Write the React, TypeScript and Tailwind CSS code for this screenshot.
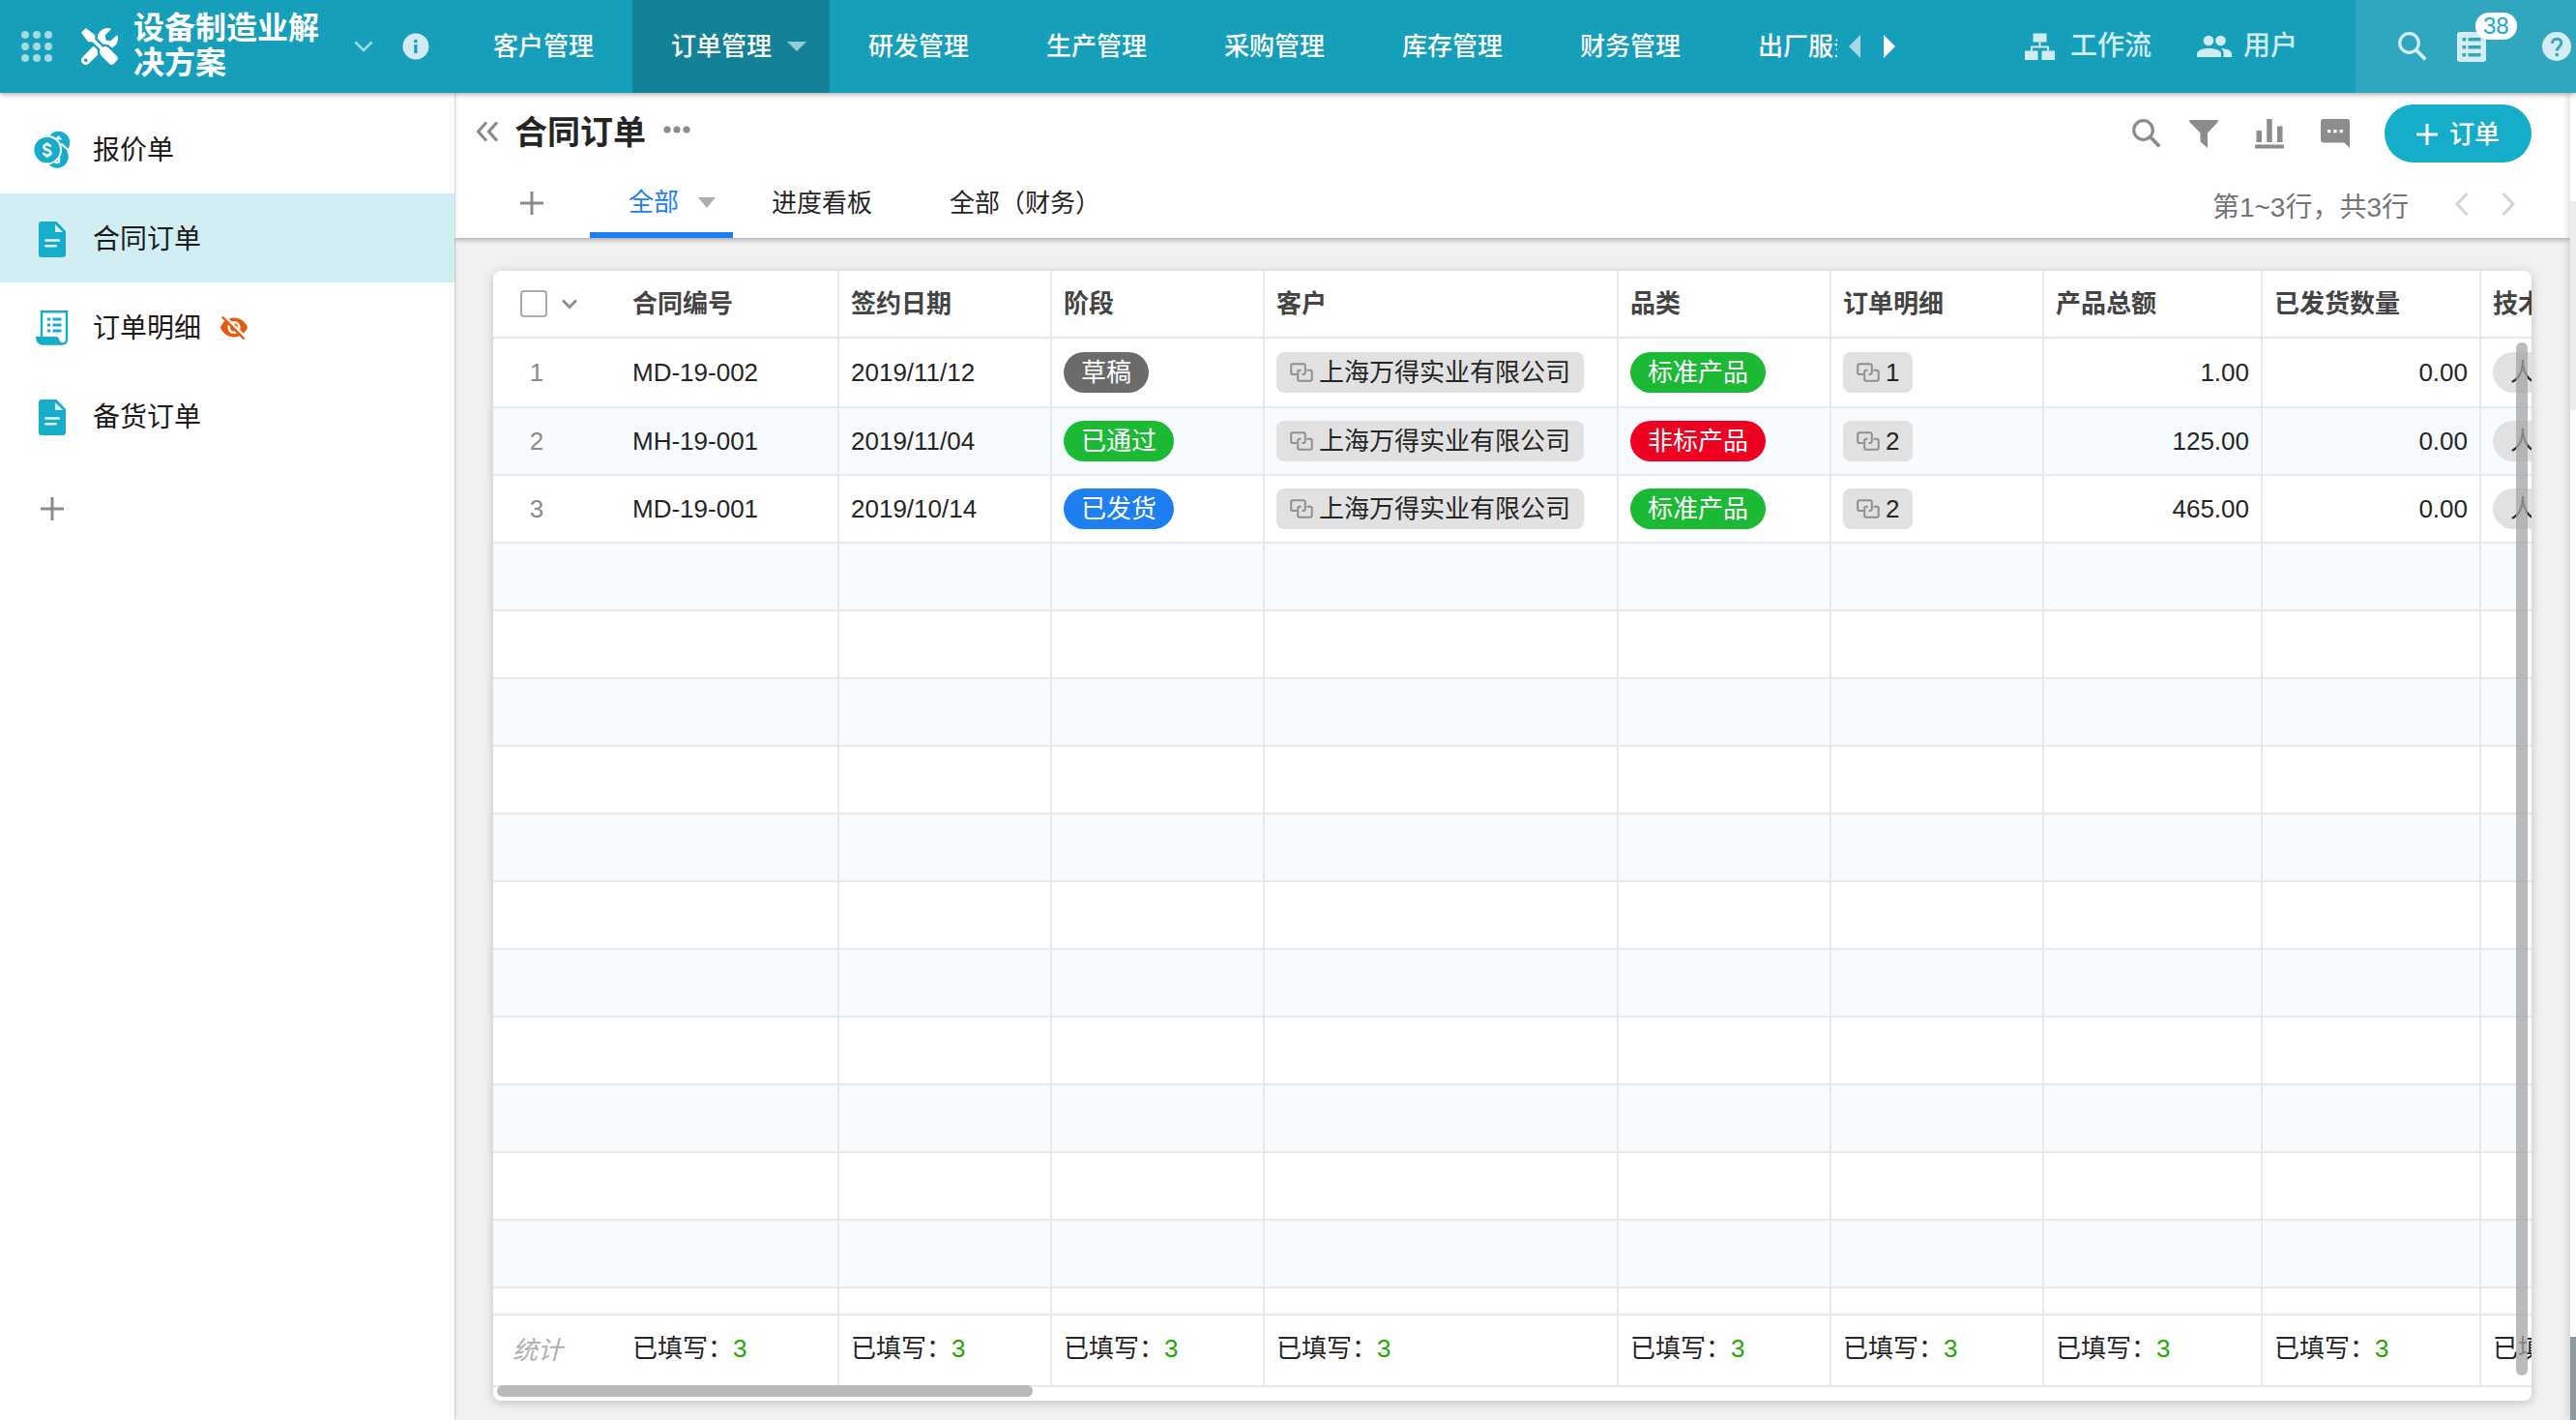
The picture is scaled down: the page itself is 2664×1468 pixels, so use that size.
import type { ReactNode } from 'react';
import clsx from 'clsx';
import { FaTools } from 'react-icons/fa';

const NAV_ITEMS = ['客户管理', '订单管理', '研发管理', '生产管理', '采购管理', '库存管理', '财务管理', '出厂服务'];

const COLUMNS = ['签约日期', '阶段', '客户', '品类', '订单明细', '产品总额', '已发货数量', '技术员'];

const ORDERS = [
  {
    code: 'MD-19-002',
    date: '2019/11/12',
    stage: '草稿',
    stageColor: 'bg-[#6b6b6b]',
    customer: '上海万得实业有限公司',
    category: '标准产品',
    categoryColor: 'bg-[#1bb934]',
    details: 1,
    total: '1.00',
    shipped: '0.00',
  },
  {
    code: 'MH-19-001',
    date: '2019/11/04',
    stage: '已通过',
    stageColor: 'bg-[#1bb934]',
    customer: '上海万得实业有限公司',
    category: '非标产品',
    categoryColor: 'bg-[#f00020]',
    details: 2,
    total: '125.00',
    shipped: '0.00',
  },
  {
    code: 'MD-19-001',
    date: '2019/10/14',
    stage: '已发货',
    stageColor: 'bg-[#1e80f0]',
    customer: '上海万得实业有限公司',
    category: '标准产品',
    categoryColor: 'bg-[#1bb934]',
    details: 2,
    total: '465.00',
    shipped: '0.00',
  },
];

// Blank rows that fill the grid below the data
const BLANK_ROWS = Array.from({ length: 11 }, (_, i) => i);

/* ---------- icons ---------- */

function GridIcon() {
  return (
    <svg width="32" height="32" viewBox="0 0 32 32" fill="currentColor">
      {[4, 16, 28].map((y) => [4, 16, 28].map((x) => <circle key={`${x}-${y}`} cx={x} cy={y} r="4" />))}
    </svg>
  );
}

function InfoIcon() {
  return (
    <svg width="28" height="28" viewBox="0 0 28 28">
      <circle cx="14" cy="14" r="13.5" fill="#d0ecf2" />
      <rect x="12.3" y="7" width="3.2" height="3.2" fill="#169fba" />
      <rect x="12.3" y="12" width="3.2" height="9" fill="#169fba" />
    </svg>
  );
}

function SearchIcon() {
  return (
    <svg width="30" height="30" viewBox="0 0 30 30" fill="none" stroke="currentColor">
      <circle cx="11.5" cy="11.5" r="9.8" strokeWidth="3.2" />
      <path d="M18.5 18.5L28.3 28.3" strokeWidth="3.8" />
    </svg>
  );
}

function WorkflowIcon() {
  return (
    <svg width="31" height="28" viewBox="0 0 31 28" fill="currentColor">
      <rect x="8.5" y="0.5" width="14" height="9" />
      <rect x="0" y="18.5" width="13.5" height="9.5" />
      <rect x="17.5" y="18.5" width="13.5" height="9.5" />
      <path d="M14.5 9.5h2v4h8.5v5h-2v-3H8v3H6v-5h8.5z" />
    </svg>
  );
}

function UsersIcon() {
  return (
    <svg width="36" height="24" viewBox="0 0 36 24" fill="currentColor">
      <circle cx="12" cy="6" r="5.3" />
      <circle cx="24.5" cy="6" r="5.3" />
      <path d="M0 23v-3.5C0 16 6 14 12.5 14S25 16 25 19.5V23z" />
      <path d="M27.5 23v-4c0-2-1-3.7-3-4.9 6 .2 11.500 2.1 11.500 5.4V23z" />
    </svg>
  );
}

function ListIcon() {
  return (
    <svg width="30" height="31" viewBox="0 0 30 31">
      <rect width="30" height="31" rx="3" fill="#d4edf2" />
      <g fill="#30a7bf">
        {[6, 14, 22].map((y) => (
          <g key={y}>
            <rect x="5.5" y={y} width="3.5" height="3.5" />
            <rect x="11.5" y={y} width="13" height="3.5" />
          </g>
        ))}
      </g>
    </svg>
  );
}

function HelpIcon() {
  return (
    <svg width="30" height="30" viewBox="0 0 30 30">
      <circle cx="15" cy="15" r="15" fill="#d4edf2" />
      <path
        d="M10.5 12c0-3 2-4.800 4.700-4.800s4.600 1.800 4.600 4.300c0 3.600-4.600 4-4.600 8"
        fill="none"
        stroke="#30a7bf"
        strokeWidth="3"
      />
      <rect x="13.6" y="22" width="3.2" height="3.2" fill="#30a7bf" />
    </svg>
  );
}

function CoinsIcon() {
  return (
    <svg width="38" height="40" viewBox="0 0 38 40">
      <circle cx="24" cy="27" r="11.7" fill="#16adca" />
      <path d="M22 33.5l4-1v-5" stroke="#fff" strokeWidth="2.2" fill="none" />
      <circle cx="25.5" cy="12.5" r="11.7" fill="#16adca" />
      <path d="M25.5 5.500v2.800M22.500 8.500h6M28 13.500l10 8.500" stroke="#fff" strokeWidth="2.2" fill="none" />
      <circle cx="13.7" cy="20" r="15.3" fill="#fff" />
      <circle cx="13.7" cy="20" r="13.3" fill="#16adca" />
      <path
        d="M17.200 16.800c-.3-1.600-1.600-2.300-3.500-2.300-2 0-3.300 1-3.300 2.500 0 3.800 7 2 7 5.900 0 1.700-1.500 2.700-3.600 2.700s-3.500-.9-3.800-2.700M13.800 12.500v2.500M13.800 25v2.800"
        fill="none"
        stroke="#fff"
        strokeWidth="2.6"
      />
    </svg>
  );
}

function DocIcon() {
  return (
    <svg width="28" height="37" viewBox="0 0 28 37">
      <path d="M3 0h15.500L28 10v24a3 3 0 0 1-3 3H3a3 3 0 0 1-3-3V3a3 3 0 0 1 3-3z" fill="#16adca" />
      <path d="M17 3v8h8.200z" fill="#d9f1f5" />
      <path d="M7.300 19.500h13.500M7.300 25.300h10.500" stroke="#e3f5f8" strokeWidth="2.6" strokeLinecap="round" />
    </svg>
  );
}

function ReceiptIcon() {
  return (
    <svg width="34" height="36" viewBox="0 0 34 36">
      <path
        d="M6 27V1.200h26V30c0 2.800-1.800 4.500-4.500 4.500S23 32.500 22.500 28"
        fill="none"
        stroke="#16adca"
        strokeWidth="2.4"
      />
      <path d="M0 27h22c.4 4 2.200 7 5.500 8.700H7c-4.500 0-7-3.500-7-8.700z" fill="#16adca" />
      <g fill="#16adca">
        {[7.5, 13.5, 19.5].map((y) => (
          <g key={y}>
            <rect x="12" y={y} width="3" height="3" />
            <rect x="17.5" y={y} width="9" height="3" />
          </g>
        ))}
      </g>
    </svg>
  );
}

function HiddenIcon() {
  return (
    <svg width="28" height="26" viewBox="0 0 28 26">
      <path d="M0 12.500C2.500 6 8 2.500 14 2.500S25.500 6 28 12.500C25.500 19 20 22.500 14 22.500S2.500 19 0 12.500z" fill="#e9590c" />
      <circle cx="14" cy="12.5" r="5.3" fill="none" stroke="#fff" strokeWidth="2.6" />
      <path d="M4 .5L26.500 23" stroke="#fff" strokeWidth="2.4" />
      <path d="M1.800 1.500L24.500 24.500" stroke="#e9590c" strokeWidth="2.4" />
    </svg>
  );
}

function PlusIcon() {
  return (
    <svg width="24" height="24" viewBox="0 0 24 24" stroke="currentColor" strokeWidth="3">
      <path d="M12 0v24M0 12h24" />
    </svg>
  );
}

function FilterIcon() {
  return (
    <svg width="30" height="29" viewBox="0 0 30 29" fill="currentColor">
      <path d="M1.500 0h27c1.300 0 1.900 1.200 1 2.300L19 13.500V29l-7.500-6.500v-9L.5 2.300C-.4 1.200.2 0 1.500 0z" />
    </svg>
  );
}

function ChartIcon() {
  return (
    <svg width="30" height="31" viewBox="0 0 30 31" fill="currentColor">
      <rect x="1.5" y="12" width="5.5" height="12" />
      <rect x="12.2" y="0" width="5.5" height="24" />
      <rect x="23" y="7.5" width="5.5" height="16.5" />
      <rect x="0" y="26.5" width="30" height="4" />
    </svg>
  );
}

function CommentIcon() {
  return (
    <svg width="30" height="30" viewBox="0 0 30 30" fill="currentColor">
      <path d="M3 0h24a3 3 0 0 1 3 3v27l-5.500-5.500H3a3 3 0 0 1-3-3V3a3 3 0 0 1 3-3z" />
      <path d="M7 11h3.300v3.300H7zM13.300 11h3.300v3.300h-3.300zM19.600 11h3.300v3.300h-3.300z" fill="#fff" />
    </svg>
  );
}

function RelationIcon() {
  return (
    <svg width="24" height="20" viewBox="0 0 24 20" fill="none" stroke="#8f8f8f" strokeWidth="2">
      <path d="M7 12H3a1.800 1.800 0 0 1-1.800-1.800V3A1.800 1.800 0 0 1 3 1.200h11A1.800 1.800 0 0 1 15.800 3v7.200A1.800 1.800 0 0 1 14 12h-1.500" />
      <path d="M17.500 7.800h3.400a1.800 1.800 0 0 1 1.800 1.800V17a1.800 1.800 0 0 1-1.800 1.800H10A1.800 1.800 0 0 1 8.200 17V9.600A1.800 1.800 0 0 1 10 7.800h1.500" />
    </svg>
  );
}

/* ---------- header ---------- */

function TopBar() {
  return (
    <header className="relative z-20 flex h-24 items-center bg-[#169fba] text-white shadow-[0_1px_6px_rgba(0,0,0,0.4)]">
      <div className="flex w-[470px] shrink-0 items-center pl-[22px]">
        <button aria-label="应用" className="text-[#a2d9e3]">
          <GridIcon />
        </button>
        <FaTools className="ml-[30px] size-[38px]" />
        <h1 className="ml-4 w-[200px] pb-0.5 text-[32px] leading-9 font-bold">设备制造业解决方案</h1>
        <button aria-label="展开" className="ml-7 text-[#a2d9e3]">
          <svg width="20" height="12" viewBox="0 0 20 12" fill="none" stroke="currentColor" strokeWidth="2.5">
            <path d="M1.500 1.500L10 10l8.500-8.500" />
          </svg>
        </button>
        <button aria-label="信息" className="ml-[30px]">
          <InfoIcon />
        </button>
      </div>

      <nav className="flex h-full min-w-0 flex-1 overflow-hidden text-[26px] font-medium whitespace-nowrap">
        {NAV_ITEMS.map((item) => {
          const active = item === '订单管理';
          return (
            <a
              key={item}
              href="#"
              className={clsx('flex h-full shrink-0 items-center gap-4 pl-10', active ? 'bg-[#148296] pr-6' : 'pr-10')}
            >
              {item}
              {active && (
                <svg width="20" height="10" viewBox="0 0 20 10" fill="#99cbd5">
                  <path d="M0 0h20L10 10z" />
                </svg>
              )}
            </a>
          );
        })}
      </nav>

      <div className="flex shrink-0 items-center gap-6 pl-3">
        <button aria-label="向左" className="text-[#a2d9e3]">
          <svg width="12" height="24" viewBox="0 0 12 24" fill="currentColor">
            <path d="M12 0v24L0 12z" />
          </svg>
        </button>
        <button aria-label="向右">
          <svg width="12" height="24" viewBox="0 0 12 24" fill="currentColor">
            <path d="M0 0v24l12-12z" />
          </svg>
        </button>
      </div>

      <div className="flex shrink-0 items-center pr-[60px] pl-[134px] text-[28px] font-medium text-[#d0ecf2]">
        <a href="#" className="flex items-center gap-4">
          <WorkflowIcon />
          工作流
        </a>
        <a href="#" className="ml-[47px] flex items-center gap-3">
          <UsersIcon />
          用户
        </a>
      </div>

      <div className="flex h-full shrink-0 items-center bg-[#30a7bf] pr-[5px] pl-11 text-[#d4edf2]">
        <button aria-label="搜索">
          <SearchIcon />
        </button>
        <button aria-label="待办" className="relative ml-[31px]">
          <ListIcon />
          <span className="absolute -top-5 left-[19px] rounded-full bg-white px-2 text-[24px] leading-7 text-[#16adca]">
            38
          </span>
        </button>
        <button aria-label="帮助" className="ml-[58px]">
          <HelpIcon />
        </button>
      </div>
    </header>
  );
}

/* ---------- sidebar ---------- */

function SidebarItem({ icon, label, active, hidden }: { icon: ReactNode; label: string; active?: boolean; hidden?: boolean }) {
  return (
    <a href="#" className={clsx('flex h-[92px] items-center pt-0.5 pl-[35px]', active && 'bg-[#d0eef3]')}>
      <span className="flex w-[38px] justify-center">{icon}</span>
      <span className="ml-[23px] pt-0.5 text-[28px]">{label}</span>
      {hidden && (
        <span className="ml-5">
          <HiddenIcon />
        </span>
      )}
    </a>
  );
}

function Sidebar() {
  return (
    <aside className="relative z-10 w-[470px] shrink-0 bg-white pt-3 text-[#1a1a1a] shadow-[0_0_3px_rgba(0,0,0,0.35)]">
      <SidebarItem icon={<CoinsIcon />} label="报价单" />
      <SidebarItem icon={<DocIcon />} label="合同订单" active />
      <SidebarItem icon={<ReceiptIcon />} label="订单明细" hidden />
      <SidebarItem icon={<DocIcon />} label="备货订单" />
      <button aria-label="添加" className="mt-[38px] ml-[42px] block text-[#8c8c8c]">
        <PlusIcon />
      </button>
    </aside>
  );
}

/* ---------- worksheet ---------- */

function SheetHeader() {
  return (
    <div className="relative bg-white pt-3 shadow-[0_1px_6px_rgba(0,0,0,0.4)]">
      <div className="flex h-[60px] items-center pr-10 pl-[22px] text-[#8c8c8c]">
        <button aria-label="收起">
          <svg width="24" height="22" viewBox="0 0 24 22" fill="none" stroke="currentColor" strokeWidth="3.2" className="mb-1">
            <path d="M11 1.500L2.500 11l8.500 9.500M22 1.500L13.500 11l8.500 9.500" />
          </svg>
        </button>
        <h2 className="ml-4 pb-0.5 text-[34px] leading-10 font-bold text-[#252525]">合同订单</h2>
        <button aria-label="更多" className="ml-[18px] pb-2">
          <svg width="28" height="8" viewBox="0 0 28 8" fill="currentColor">
            <circle cx="4" cy="4" r="3.6" />
            <circle cx="14" cy="4" r="3.6" />
            <circle cx="24" cy="4" r="3.6" />
          </svg>
        </button>
        <div className="ml-auto flex items-center">
          <button aria-label="搜索">
            <SearchIcon />
          </button>
          <button aria-label="筛选" className="ml-[29px]">
            <FilterIcon />
          </button>
          <button aria-label="统计" className="ml-[38px]">
            <ChartIcon />
          </button>
          <button aria-label="讨论" className="ml-[38px]">
            <CommentIcon />
          </button>
          <button className="ml-9 flex h-[60px] w-[152px] items-center justify-center gap-3 rounded-full bg-[#16adca] pt-0.5 text-[26px] font-medium text-white">
            <svg width="22" height="22" viewBox="0 0 22 22" stroke="currentColor" strokeWidth="3">
              <path d="M11 0v22M0 11h22" />
            </svg>
            订单
          </button>
        </div>
      </div>

      <div className="flex h-[78px] items-stretch pr-10 text-[26px] text-[#252525]">
        <button aria-label="添加视图" className="ml-[68px] pt-1.5 text-[#8c8c8c]">
          <PlusIcon />
        </button>
        <button className="ml-12 flex items-center gap-5 border-b-6 border-[#1e80f0] px-10 pt-2.5 pr-[18px] text-[#1e80f0]">
          全部
          <svg width="18" height="11" viewBox="0 0 18 11" fill="#adadad">
            <path d="M0 0h18L9 11z" />
          </svg>
        </button>
        <button className="px-10 pt-1.5">进度看板</button>
        <button className="px-10 pt-1.5">全部（财务）</button>
        <div className="ml-auto flex items-center pt-4 text-[28px] text-[#757575]">
          第1~3行，共3行
          <div className="ml-12 flex gap-[34px] pr-[17px] pb-2 text-[#d4d4d4]">
            <button aria-label="上一页">
              <svg width="14" height="24" viewBox="0 0 14 24" fill="none" stroke="currentColor" strokeWidth="3">
                <path d="M12.500 1L2 12l10.500 11" />
              </svg>
            </button>
            <button aria-label="下一页">
              <svg width="14" height="24" viewBox="0 0 14 24" fill="none" stroke="currentColor" strokeWidth="3">
                <path d="M1.500 1L12 12 1.500 23" />
              </svg>
            </button>
          </div>
        </div>
      </div>
    </div>
  );
}

function Pill({ color, children }: { color: string; children: ReactNode }) {
  return (
    <span className={clsx('inline-flex h-[42px] items-center rounded-full px-[18px] align-middle', color)}>
      {children}
    </span>
  );
}

function RelationChip({ children }: { children: ReactNode }) {
  return (
    <span className="inline-flex h-[42px] items-center gap-[6px] rounded-lg bg-[#e1e1e1] px-[14px] align-middle">
      <RelationIcon />
      {children}
    </span>
  );
}

const CELL = 'border-r-2 border-b-2 border-[#e6e8ea] px-3 py-0';
const CELL_OPEN = 'border-b-2 border-[#e6e8ea] py-0';

function BlankRow({ height, striped }: { height: string; striped?: boolean }) {
  return (
    <tr className={clsx(height, striped && 'bg-[#f7fbfe]')}>
      <td className={CELL_OPEN} />
      <td className={CELL} />
      {COLUMNS.map((column) => (
        <td key={column} className={CELL} />
      ))}
    </tr>
  );
}

function OrderTable() {
  return (
    <table className="w-[2284px] table-fixed border-separate border-spacing-0 text-left text-[26px] leading-8 text-[#252525]">
      <colgroup>
        <col className="w-[132px]" />
        <col className="w-[226px]" />
        <col className="w-[220px]" />
        <col className="w-[220px]" />
        <col className="w-[366px]" />
        <col className="w-[220px]" />
        <col className="w-[220px]" />
        <col className="w-[226px]" />
        <col className="w-[226px]" />
        <col className="w-[228px]" />
      </colgroup>
      <thead className="text-[#444]">
        <tr className="h-[70px]">
          <th className={CELL_OPEN}>
            <div className="flex items-center gap-[14px] pl-7">
              <input
                type="checkbox"
                aria-label="全选"
                className="size-7 appearance-none rounded-sm border-2 border-[#aaa] bg-white"
              />
              <button aria-label="选择范围">
                <svg width="18" height="11" viewBox="0 0 16 11" fill="none" stroke="#8c8c8c" strokeWidth="2.8">
                  <path d="M1 1.500l7 7 7-7" />
                </svg>
              </button>
            </div>
          </th>
          <th className={clsx(CELL, 'font-bold')}>合同编号</th>
          {COLUMNS.map((column) => (
            <th key={column} className={clsx(CELL, 'font-bold')}>
              {column}
            </th>
          ))}
        </tr>
      </thead>
      <tbody>
        {ORDERS.map((order, i) => (
          <tr key={order.code} className={clsx(i === 0 ? 'h-[72px]' : 'h-[70px]', i % 2 === 1 && 'bg-[#f7fbfe]')}>
            <td className={clsx(CELL_OPEN, 'pr-[42px] text-center text-[#8c8c8c]')}>{i + 1}</td>
            <td className={CELL}>{order.code}</td>
            <td className={CELL}>{order.date}</td>
            <td className={clsx(CELL, 'text-white')}>
              <Pill color={order.stageColor}>{order.stage}</Pill>
            </td>
            <td className={CELL}>
              <RelationChip>{order.customer}</RelationChip>
            </td>
            <td className={clsx(CELL, 'text-white')}>
              <Pill color={order.categoryColor}>{order.category}</Pill>
            </td>
            <td className={CELL}>
              <RelationChip>{order.details}</RelationChip>
            </td>
            <td className={clsx(CELL, 'text-right')}>{order.total}</td>
            <td className={clsx(CELL, 'text-right')}>{order.shipped}</td>
            <td className={CELL}>
              <Pill color="bg-[#e1e1e1]">人员</Pill>
            </td>
          </tr>
        ))}
        {BLANK_ROWS.map((i) => (
          <BlankRow key={i} height="h-[70px]" striped={i % 2 === 0} />
        ))}
        <BlankRow height="h-7" />
      </tbody>
      <tfoot>
        <tr className="h-[74px]">
          <td className={clsx(CELL_OPEN, 'pl-5 text-[#b0b0b0] italic')}>统计</td>
          {['合同编号', ...COLUMNS].map((column) => (
            <td key={column} className={clsx(CELL, 'pb-1')}>
              已填写：<span className="text-[#29a60b]">3</span>
            </td>
          ))}
        </tr>
      </tfoot>
    </table>
  );
}

export default function App() {
  return (
    <div
      lang="zh-CN"
      className="flex min-h-screen flex-col overflow-hidden bg-[#f1f1f1] font-['Liberation_Sans','Noto_Sans_CJK_SC',sans-serif]"
    >
      <TopBar />
      <div className="flex flex-1">
        <Sidebar />
        <main className="flex min-w-0 flex-1 flex-col">
          <SheetHeader />
          <div className="flex flex-1 flex-col px-10 pt-[34px] pb-5">
            <section className="relative flex-1 overflow-hidden rounded-lg bg-white pb-[14px] shadow-[0_2px_12px_rgba(0,0,0,0.2)]">
              <OrderTable />
              {/* overlay scroll thumbs */}
              <div className="absolute top-[74px] right-1 bottom-[26px] w-3 rounded-full bg-[#a4a4a4]/75" />
              <div className="absolute bottom-1 left-1 h-3 w-[554px] rounded-full bg-[#bababa]" />
            </section>
          </div>
        </main>
        <div className="relative z-10 flex w-[6px] shrink-0 flex-col bg-white shadow-[0_0_10px_rgba(0,0,0,0.25)]">
          <div className="mt-28 h-[216px] bg-[#ededed]" />
          <div className="mt-auto h-[86px] bg-[#8c999d]" />
        </div>
      </div>
    </div>
  );
}
